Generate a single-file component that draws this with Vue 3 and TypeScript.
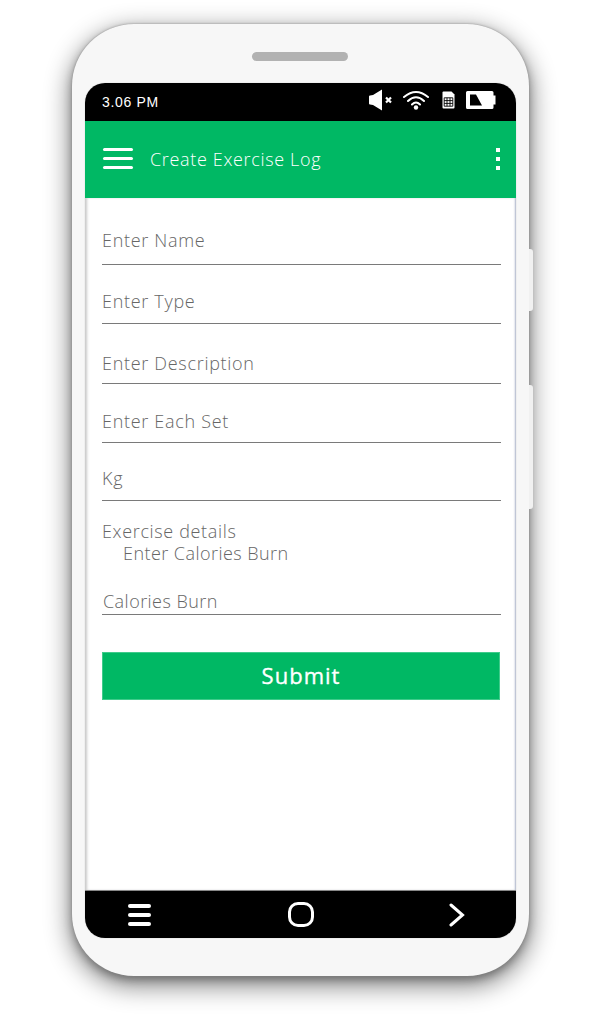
<script setup lang="ts">
const fields: string[] = ['Enter Name', 'Enter Type', 'Enter Description', 'Enter Each Set', 'Kg']
</script>

<template>
  <div class="page">
    <div class="phone">
      <span class="side side-top"></span>
      <span class="side side-bottom"></span>
      <div class="speaker-row"><span class="speaker"></span></div>
      <div class="screen">
        <div class="status">
          <span class="time">3.06 PM</span>
          <div class="status-icons">
            <svg class="i-mute" viewBox="0 0 24 22" width="24" height="22">
              <path d="M0 7.5 Q0 6.5 1 6.5 L4 6 L13 0.5 V21.5 L4 16 L1 15.5 Q0 15.5 0 14.5 Z" fill="#fff" />
              <path d="M17 8.5 L22 13.5 M22 8.5 L17 13.5" stroke="#fff" stroke-width="2.2" fill="none" />
            </svg>
            <svg class="i-wifi" viewBox="0 0 26 20" width="26" height="20">
              <path d="M1 7 Q13 -3 25 7 M5 11 Q13 3.5 21 11 M9 14.5 Q13 10.5 17 14.5" stroke="#fff" stroke-width="2" fill="none" stroke-linecap="round" />
              <circle cx="13" cy="17.5" r="2.2" fill="#fff" />
            </svg>
            <svg class="i-sim" viewBox="0 0 13 18" width="13" height="18">
              <path d="M0.5 1.5 Q0.5 0.5 1.5 0.5 H9.5 L12.5 3.5 V16.5 Q12.5 17.5 11.5 17.5 H1.5 Q0.5 17.5 0.5 16.5 Z" fill="#fff" />
              <path d="M2.2 6.8 H10.8 V15.2 H2.2 Z M2.2 9.6 H10.8 M2.2 12.4 H10.8 M5 6.8 V15.2 M8 6.8 V15.2" stroke="#000" stroke-width="0.9" fill="none" />
            </svg>
            <svg class="i-batt" viewBox="0 0 30 18" width="30" height="18">
              <path d="M1.5 0 H26 Q27.5 0 27.5 1.5 V4.5 H29.5 V13.5 H27.5 V16.5 Q27.5 18 26 18 H1.5 Q0 18 0 16.5 V1.5 Q0 0 1.5 0 Z" fill="#fff" />
              <path d="M4 3.5 H10 L16 14.5 H4 Z" fill="#000" />
            </svg>
          </div>
        </div>

        <header class="appbar">
          <div class="burger"><span></span><span></span><span></span></div>
          <h1 class="title">Create Exercise Log</h1>
          <div class="dots"><span></span><span></span><span></span></div>
        </header>

        <main class="content">
          <form class="form" @submit.prevent>
            <div v-for="f in fields" :key="f" class="field">{{ f }}</div>
            <div class="details">
              <div class="details-title">Exercise details</div>
              <div class="details-sub">Enter Calories Burn</div>
              <div class="calories">Calories Burn</div>
            </div>
            <button class="submit" type="submit">Submit</button>
          </form>
        </main>

        <nav class="navbar">
          <div class="nav-menu"><span></span><span></span><span></span></div>
          <span class="nav-home"></span>
          <svg class="nav-next" viewBox="0 0 16 24" width="16" height="24">
            <path d="M2 2 L13.5 12 L2 22" stroke="#fff" stroke-width="3" fill="none" stroke-linecap="round" stroke-linejoin="miter" />
          </svg>
        </nav>
      </div>
    </div>
  </div>
</template>

<style>
html, body { margin: 0; background: #fff; }
</style>

<style scoped>
.page {
  width: 592px;
  height: 1014px;
  box-sizing: border-box;
  padding: 24px 0 0 72px;
  background: #fff;
  overflow: hidden;
  font-family: "Open Sans", "Noto Sans", sans-serif;
}
.phone {
  position: relative;
  width: 457px;
  height: 952px;
  box-sizing: border-box;
  padding: 0 13px;
  background: #f7f7f7;
  border-radius: 62px;
  box-shadow: 0 0 2px #8a8a8a, 0 4px 8px rgba(0, 0, 0, 0.3), 0 8px 24px 3px rgba(0, 0, 0, 0.45);
}
.side {
  position: absolute;
  right: -4px;
  width: 4px;
  background: #f1f1f1;
  border-radius: 0 3px 3px 0;
}
.side-top { top: 225px; height: 62px; }
.side-bottom { top: 361px; height: 124px; }
.speaker-row {
  height: 59px;
  display: flex;
  justify-content: center;
  align-items: flex-start;
  padding: 28px 1px 0 0;
  box-sizing: border-box;
}
.speaker {
  width: 96px;
  height: 9px;
  border-radius: 5px;
  background: #b2b2b2;
}
.screen {
  width: 431px;
  height: 855px;
  border-radius: 20px;
  overflow: hidden;
  display: flex;
  flex-direction: column;
  background: #fff;
  box-shadow: 0 0 1px #aaa;
}
.status {
  height: 38px;
  flex: none;
  background: #000;
  display: flex;
  align-items: center;
  justify-content: space-between;
  padding: 0 20px 0 17px;
}
.time {
  font-family: "Liberation Sans", Arial, sans-serif;
  font-size: 14px;
  letter-spacing: 0.65px;
  color: #fff;
}
.status-icons {
  display: flex;
  align-items: center;
  padding-bottom: 4px;
}
.i-mute { margin-right: 10px; }
.i-wifi { margin-right: 13px; }
.i-sim { margin-right: 11px; }
.appbar {
  height: 77px;
  flex: none;
  background: #00b864;
  display: flex;
  align-items: center;
  padding: 0 16px 0 18px;
}
.burger {
  display: flex;
  flex-direction: column;
  gap: 6px;
  width: 30px;
  margin-bottom: 2px;
}
.burger span {
  height: 3px;
  border-radius: 2px;
  background: #fff;
}
.title {
  margin: 0 0 2px 17px;
  flex: 1;
  font-size: 18px;
  font-weight: 300;
  letter-spacing: 0.66px;
  color: #fff;
}
.dots {
  display: flex;
  flex-direction: column;
  gap: 5px;
  width: 4px;
  margin-bottom: 1px;
}
.dots span {
  height: 4px;
  background: #fff;
}
.content {
  flex: 1;
  box-shadow: inset 3px 0 3px -1px #c8c8c8, inset -2px 0 2px -1px #aab2c8;
}
.form {
  display: flex;
  flex-direction: column;
  padding: 0 15px 0 17px;
}
.field {
  box-sizing: border-box;
  border-bottom: 1px solid #7a7a7a;
  font-size: 18px;
  line-height: 24px;
  font-weight: 300;
  letter-spacing: 0.7px;
  color: #666;
  height: 59px;
  padding-top: 24px;
}
.field:nth-child(1) { height: 67px; padding-top: 30px; }
.field:nth-child(3) { height: 60px; padding-top: 27px; }
.field:nth-child(4) { padding-top: 25px; }
.field:nth-child(5) { height: 58px; padding-top: 23px; }
.details {
  box-sizing: border-box;
  height: 114px;
  border-bottom: 1px solid #7a7a7a;
  font-size: 18px;
  font-weight: 300;
  letter-spacing: 0.45px;
  color: #666;
  padding-top: 18px;
}
.details-title { line-height: 24px; letter-spacing: 0.65px; }
.details-sub {
  line-height: 22px;
  padding-left: 21px;
  margin-top: -1px;
}
.calories {
  line-height: 24px;
  padding: 25px 0 0 1px;
}
.submit {
  margin-top: 37px;
  width: 398px;
  height: 48px;
  border: 1px solid #3fcb8b;
  background: #00b864;
  color: #fff;
  font-family: inherit;
  font-size: 22px;
  font-weight: 500;
  letter-spacing: 1px;
  -webkit-text-stroke: 0.35px #fff;
  padding: 0 0 3px;
}
.navbar {
  height: 48px;
  flex: none;
  margin-top: auto;
  background: #000;
  border-top: 1px solid #888;
  box-sizing: border-box;
  display: flex;
  align-items: center;
  justify-content: space-between;
  padding: 0 51px 0 43px;
}
.nav-menu {
  display: flex;
  flex-direction: column;
  gap: 5px;
  width: 23px;
}
.nav-menu span {
  height: 4px;
  border-radius: 2px;
  background: #fff;
}
.nav-home {
  box-sizing: border-box;
  width: 26px;
  height: 25px;
  margin-left: 2px;
  border: 3px solid #fff;
  border-radius: 10px;
}
</style>
